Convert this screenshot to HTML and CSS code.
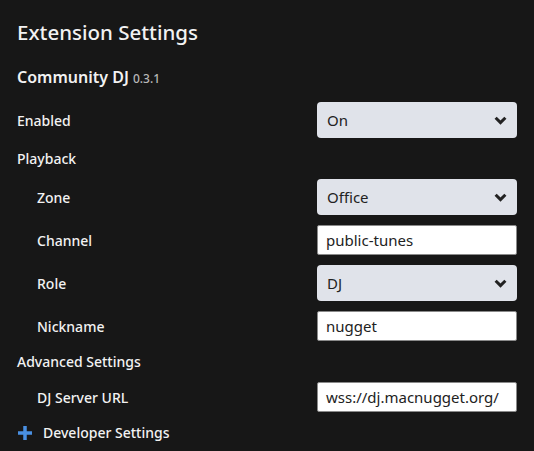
FILE: index.html
```html
<!DOCTYPE html>
<html>
<head>
<meta charset="utf-8">
<link rel="stylesheet" href="styles.css">
</head>
<body>
<div class="page">
  <h1 class="title">Extension Settings</h1>
  <h2 class="ext">Community DJ <span class="ver">0.3.1</span></h2>
  <div class="rows">
    <div class="row">
      <span class="label">Enabled</span>
      <div class="select"><span>On</span><svg class="chev" viewBox="0 0 12 8"><path d="M1.5 1.5 L6 6 L10.5 1.5" /></svg></div>
    </div>
    <div class="row group"><span class="label">Playback</span></div>
    <div class="row">
      <span class="label sub">Zone</span>
      <div class="select"><span>Office</span><svg class="chev" viewBox="0 0 12 8"><path d="M1.5 1.5 L6 6 L10.5 1.5" /></svg></div>
    </div>
    <div class="row">
      <span class="label sub">Channel</span>
      <div class="input">public-tunes</div>
    </div>
    <div class="row">
      <span class="label sub">Role</span>
      <div class="select"><span>DJ</span><svg class="chev" viewBox="0 0 12 8"><path d="M1.5 1.5 L6 6 L10.5 1.5" /></svg></div>
    </div>
    <div class="row">
      <span class="label sub">Nickname</span>
      <div class="input">nugget</div>
    </div>
    <div class="row group"><span class="label">Advanced Settings</span></div>
    <div class="row">
      <span class="label sub">DJ Server URL</span>
      <div class="input">wss://dj.macnugget.org/</div>
    </div>
    <div class="row group">
      <span class="label dev"><svg class="plus" viewBox="0 0 16 16"><path d="M8 1 V15 M1 8 H15" /></svg>Developer Settings</span>
    </div>
  </div>
</div>
</body>
</html>
```
FILE: styles.css
```css
html, body {
  margin: 0;
  padding: 0;
  background: #171717;
}
.page {
  padding: 17px 17px 0 17px;
  font-family: "Noto Sans", "Open Sans", sans-serif;
  color: #f2f2f2;
}
.title {
  margin: 0;
  font-size: 20.5px;
  font-weight: 500;
  line-height: 30px;
}
.ext {
  margin: 18px 0 0 0;
  font-size: 16px;
  font-weight: 600;
  line-height: 24px;
}
.ver {
  font-size: 12px;
  font-weight: 500;
  color: #b8b8b8;
}
.rows {
  margin-top: 11px;
  display: flex;
  flex-direction: column;
  gap: 10px;
}
.row {
  display: flex;
  align-items: center;
  justify-content: space-between;
}
.group {
  height: 21px;
}
.label {
  font-size: 14px;
  font-weight: 500;
}
.label.sub {
  padding-left: 20px;
}
.dev {
  display: flex;
  align-items: center;
  gap: 10px;
}
.plus {
  width: 16px;
  height: 16px;
  stroke: #4a90e2;
  stroke-width: 3.5;
  fill: none;
}
.select {
  width: 200px;
  height: 36px;
  box-sizing: border-box;
  background: #e0e3ea;
  border-radius: 4px;
  display: flex;
  align-items: center;
  justify-content: space-between;
  padding: 0 10px;
  color: #222;
  font-size: 15px;
}
.chev {
  width: 13px;
  height: 9px;
  fill: none;
  stroke: #222;
  stroke-width: 2.8;
}
.input {
  width: 200px;
  height: 30px;
  box-sizing: border-box;
  background: #fff;
  border: 1px solid #8a8a8a;
  border-radius: 2px;
  display: flex;
  align-items: center;
  padding: 0 8px;
  color: #222;
  font-size: 15px;
}
```
